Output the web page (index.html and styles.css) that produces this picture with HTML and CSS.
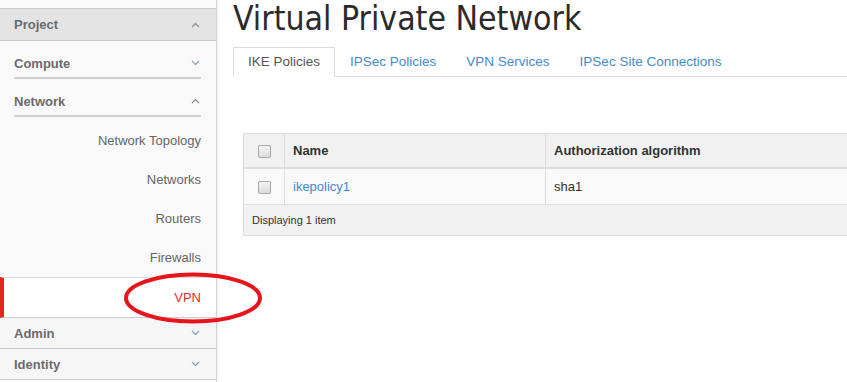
FILE: index.html
```html
<!DOCTYPE html>
<html>
<head>
<meta charset="utf-8">
<link rel="stylesheet" href="styles.css">
</head>
<body>
<div class="page">
  <aside class="sidebar">
    <div class="dash dash-open">
      <span>Project</span>
      <svg class="chev" width="9" height="6" viewBox="0 0 9 6"><polyline points="1,5 4.5,1.5 8,5" fill="none" stroke="#8a8a8a" stroke-width="1.2"/></svg>
    </div>
    <div class="panel">
      <span>Compute</span>
      <svg class="chev" width="9" height="6" viewBox="0 0 9 6"><polyline points="1,1 4.5,4.5 8,1" fill="none" stroke="#8a9bb8" stroke-width="1.2"/></svg>
    </div>
    <div class="panel">
      <span>Network</span>
      <svg class="chev" width="9" height="6" viewBox="0 0 9 6"><polyline points="1,5 4.5,1.5 8,5" fill="none" stroke="#8a8a8a" stroke-width="1.2"/></svg>
    </div>
    <ul class="links">
      <li>Network Topology</li>
      <li>Networks</li>
      <li>Routers</li>
      <li>Firewalls</li>
      <li class="active">VPN</li>
    </ul>
    <div class="dash">
      <span>Admin</span>
      <svg class="chev" width="9" height="6" viewBox="0 0 9 6"><polyline points="1,1 4.5,4.5 8,1" fill="none" stroke="#8a9bb8" stroke-width="1.2"/></svg>
    </div>
    <div class="dash">
      <span>Identity</span>
      <svg class="chev" width="9" height="6" viewBox="0 0 9 6"><polyline points="1,1 4.5,4.5 8,1" fill="none" stroke="#8a9bb8" stroke-width="1.2"/></svg>
    </div>
  </aside>
  <main class="main">
    <h1 class="title">Virtual Private Network</h1>
    <ul class="tabs">
      <li class="tab current">IKE Policies</li>
      <li class="tab">IPSec Policies</li>
      <li class="tab">VPN Services</li>
      <li class="tab">IPSec Site Connections</li>
    </ul>
    <table class="grid">
      <thead>
        <tr>
          <th class="cb"><span class="box"></span></th>
          <th class="name">Name</th>
          <th>Authorization algorithm</th>
        </tr>
      </thead>
      <tbody>
        <tr>
          <td class="cb"><span class="box"></span></td>
          <td class="name"><a class="lnk">ikepolicy1</a></td>
          <td>sha1</td>
        </tr>
      </tbody>
      <tfoot>
        <tr><td colspan="3">Displaying 1 item</td></tr>
      </tfoot>
    </table>
  </main>
  <svg class="ring" width="142" height="54" viewBox="0 0 142 54"><ellipse cx="71" cy="27" rx="67" ry="23.5" fill="none" stroke="#e8141c" stroke-width="4"/></svg>
</div>
</body>
</html>
```

FILE: styles.css
```css
html, body {
  margin: 0;
  padding: 0;
  background: #fff;
}
body {
  font-family: "Liberation Sans", Arial, sans-serif;
  font-size: 13px;
  color: #333;
  width: 847px;
  height: 382px;
  overflow: hidden;
}
.page {
  position: relative;
  display: flex;
  height: 382px;
}
.sidebar {
  width: 216px;
  flex: none;
  background: #f9f9f9;
  border-right: 1px solid #d4d4d4;
  box-shadow: 1px 0 2px rgba(0,0,0,0.08);
  padding-top: 8px;
  box-sizing: content-box;
}
.dash {
  display: flex;
  align-items: center;
  justify-content: space-between;
  height: 30px;
  padding: 0 15px 0 14px;
  border-bottom: 1px solid #ccc;
  font-weight: bold;
  color: #6b6b6b;
  background: #f6f6f6;
}
.dash-open {
  border-top: 1px solid #ccc;
  height: 31px;
  background: #e4e4e4;
}
.panel {
  display: flex;
  align-items: center;
  justify-content: space-between;
  margin: 0 15px 0 14px;
  height: 28px;
  border-bottom: 2px solid #cfcfcf;
  font-weight: bold;
  color: #6b6b6b;
  padding-top: 8px;
}
.chev {
  display: block;
  margin-right: 1px;
}
.links {
  list-style: none;
  margin: 0;
  padding: 4px 0 0 0;
}
.links li {
  height: 39px;
  line-height: 39px;
  text-align: right;
  padding-right: 15px;
  color: #666;
}
.links li.active {
  background: #fff;
  color: #e02d2d;
  border-top: 1px solid #ddd;
  border-bottom: 1px solid #ccc;
  border-left: 4px solid #e0261e;
  box-sizing: content-box;
}
.main {
  flex: 1;
  padding-left: 16px;
  min-width: 0;
}
.title {
  margin: 0;
  font-family: "DejaVu Sans Condensed", "DejaVu Sans", sans-serif;
  font-stretch: condensed;
  font-weight: normal;
  font-size: 33.5px;
  line-height: 38px;
  height: 47px;
  color: #2b2b2b;
  white-space: nowrap;
}
.tabs {
  list-style: none;
  margin: 0;
  padding: 0;
  display: flex;
  border-bottom: 1px solid #ddd;
  height: 29px;
}
.tab {
  height: 29px;
  line-height: 28px;
  padding: 0 14px;
  font-size: 13.5px;
  color: #428bca;
  border: 1px solid transparent;
  border-bottom: none;
  box-sizing: border-box;
}
.tab.current {
  color: #555;
  background: #fff;
  border-color: #ddd;
  height: 30px;
}
.grid {
  margin: 56px 0 0 10px;
  border-collapse: collapse;
  width: 640px;
  border: 1px solid #ddd;
}
.grid th, .grid td {
  text-align: left;
  padding: 0 8px;
  border: 1px solid #ddd;
}
.grid thead th {
  height: 33px;
  background: #f1f1f1;
  font-weight: bold;
  color: #333;
  border-bottom: 2px solid #ddd;
}
.grid tbody td {
  height: 35px;
  background: #f9f9f9;
  color: #333;
}
.grid tfoot td {
  height: 30px;
  background: #f1f1f1;
  font-size: 11px;
  color: #333;
}
.grid .cb {
  width: 24px;
  text-align: center;
}
.grid .name {
  width: 244px;
}
.box {
  display: inline-block;
  width: 11px;
  height: 11px;
  border: 1px solid #a8a8a8;
  border-radius: 2px;
  background: linear-gradient(#f4f4f4, #dcdcdc);
  vertical-align: middle;
}
.lnk {
  color: #428bca;
  text-decoration: none;
}
.ring {
  position: absolute;
  left: 122px;
  top: 271px;
}
```
